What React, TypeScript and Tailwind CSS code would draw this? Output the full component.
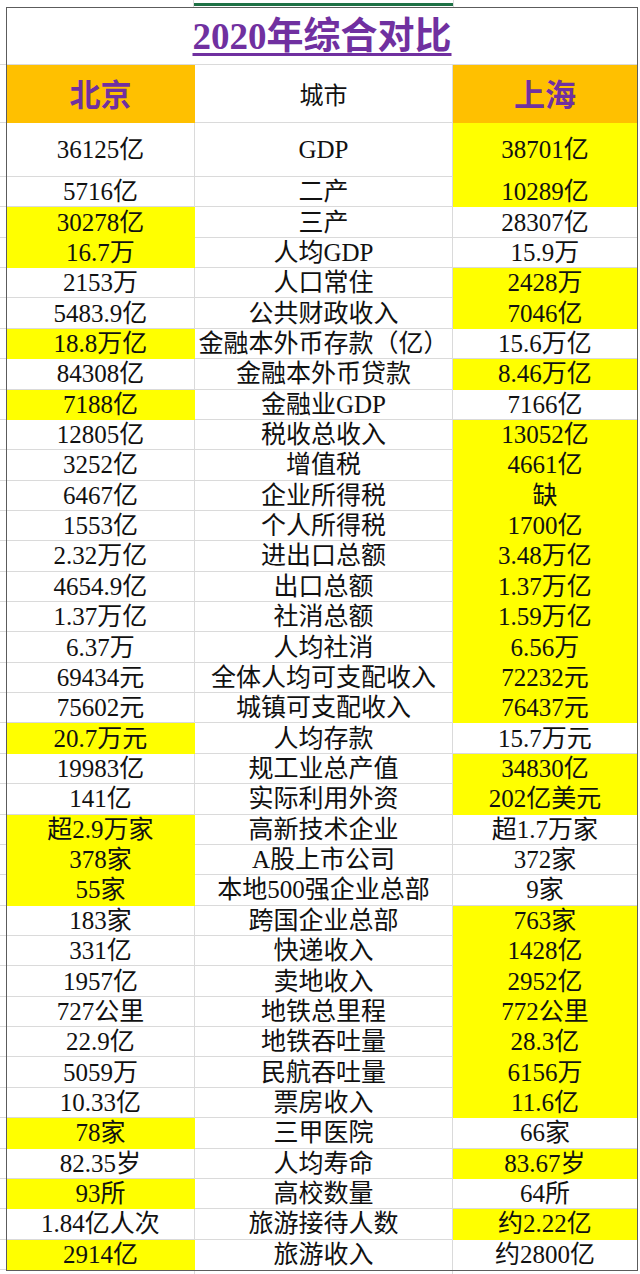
import clsx from 'clsx';

type Row = [string, string, string, 'L' | 'R'];

const ROWS: Row[] = [
  ['5716亿', '二产', '10289亿', 'R'],
  ['30278亿', '三产', '28307亿', 'L'],
  ['16.7万', '人均GDP', '15.9万', 'L'],
  ['2153万', '人口常住', '2428万', 'R'],
  ['5483.9亿', '公共财政收入', '7046亿', 'R'],
  ['18.8万亿', '金融本外币存款（亿）', '15.6万亿', 'L'],
  ['84308亿', '金融本外币贷款', '8.46万亿', 'R'],
  ['7188亿', '金融业GDP', '7166亿', 'L'],
  ['12805亿', '税收总收入', '13052亿', 'R'],
  ['3252亿', '增值税', '4661亿', 'R'],
  ['6467亿', '企业所得税', '缺', 'R'],
  ['1553亿', '个人所得税', '1700亿', 'R'],
  ['2.32万亿', '进出口总额', '3.48万亿', 'R'],
  ['4654.9亿', '出口总额', '1.37万亿', 'R'],
  ['1.37万亿', '社消总额', '1.59万亿', 'R'],
  ['6.37万', '人均社消', '6.56万', 'R'],
  ['69434元', '全体人均可支配收入', '72232元', 'R'],
  ['75602元', '城镇可支配收入', '76437元', 'R'],
  ['20.7万元', '人均存款', '15.7万元', 'L'],
  ['19983亿', '规工业总产值', '34830亿', 'R'],
  ['141亿', '实际利用外资', '202亿美元', 'R'],
  ['超2.9万家', '高新技术企业', '超1.7万家', 'L'],
  ['378家', 'A股上市公司', '372家', 'L'],
  ['55家', '本地500强企业总部', '9家', 'L'],
  ['183家', '跨国企业总部', '763家', 'R'],
  ['331亿', '快递收入', '1428亿', 'R'],
  ['1957亿', '卖地收入', '2952亿', 'R'],
  ['727公里', '地铁总里程', '772公里', 'R'],
  ['22.9亿', '地铁吞吐量', '28.3亿', 'R'],
  ['5059万', '民航吞吐量', '6156万', 'R'],
  ['10.33亿', '票房收入', '11.6亿', 'R'],
  ['78家', '三甲医院', '66家', 'L'],
  ['82.35岁', '人均寿命', '83.67岁', 'R'],
  ['93所', '高校数量', '64所', 'L'],
  ['1.84亿人次', '旅游接待人数', '约2.22亿', 'R'],
  ['2914亿', '旅游收入', '约2800亿', 'L'],
];

const GRID = 'border-[#dadada]';
const SERIF = "[font-family:'Liberation_Serif','Noto_Sans_CJK_SC',serif]";
const SANS = "[font-family:'Noto_Sans_CJK_SC',sans-serif]";

// one spreadsheet cell; filled cells hide their gridlines like Excel does
function Cell({ width, fill, last, noBottom, children }: any) {
  return (
    <div
      className={clsx(
        'flex items-center justify-center overflow-hidden whitespace-nowrap',
        width,
        !noBottom && 'border-b',
        !last && 'border-r',
        fill === 'yellow' && 'bg-[#ffff00] border-[#ffff00]',
        fill === 'orange' && 'bg-[#ffc000] border-[#ffc000]',
        !fill && `bg-white ${GRID}`
      )}
    >
      {children}
    </div>
  );
}

export default function App() {
  return (
    <div className={clsx('w-[640px] h-[1274px] bg-white overflow-hidden text-[#111]', SERIF)}>
      {/* sheet strip above the table, with the selected cell's green edge */}
      <div className="h-[7px] flex">
        <div className={`w-[194px] border-r ${GRID}`} />
        <div className="w-[259px] flex flex-col justify-end pb-[1px]">
          <div className="h-[3px] bg-[#1e7145]" />
        </div>
        <div className="w-[1px] bg-[#dadada]" />
      </div>

      <div className="flex">
        {/* left gutter ticks */}
        <div className="w-[6px] flex flex-col pt-[1px]">
          <div className={`h-[57px] border-b ${GRID}`} />
          <div className={`h-[58px] border-b ${GRID}`} />
          <div className={`h-[54px] border-b ${GRID}`} />
          {ROWS.map((_, i) => (
            <div key={i} className={`h-[30.36px] border-b ${GRID}`} />
          ))}
        </div>

        <div className="w-[632px] border border-[#5c5c5c] flex flex-col">
          {/* title */}
          <div className={`h-[57px] border-b ${GRID} flex items-center justify-center`}>
            <span className="text-[37px] font-bold text-[#7030a0] underline decoration-[3px] underline-offset-[4px] leading-none">
              2020年综合对比
            </span>
          </div>

          {/* header */}
          <div className="h-[58px] flex">
            <Cell width="w-[188px]" fill="orange">
              <span className={clsx('text-[31px] font-bold text-[#7030a0]', SANS)}>北京</span>
            </Cell>
            <Cell width="w-[258px]">
              <span className={clsx('text-[24px]', SANS)}>城市</span>
            </Cell>
            <Cell width="w-[184px]" fill="orange" last>
              <span className={clsx('text-[31px] font-bold text-[#7030a0]', SANS)}>上海</span>
            </Cell>
          </div>

          {/* GDP row is taller */}
          <div className="h-[54px] flex text-[25px]">
            <Cell width="w-[188px]">36125亿</Cell>
            <Cell width="w-[258px]">GDP</Cell>
            <Cell width="w-[184px]" fill="yellow" last>38701亿</Cell>
          </div>

          {ROWS.map(([l, m, r, hl], i) => {
            const end = i === ROWS.length - 1;
            return (
              <div key={m} className="h-[30.36px] flex text-[25px] leading-none">
                <Cell width="w-[188px]" fill={hl === 'L' ? 'yellow' : undefined} noBottom={end}>
                  {l}
                </Cell>
                <Cell width="w-[258px]" noBottom={end}>
                  {m}
                </Cell>
                <Cell width="w-[184px]" fill={hl === 'R' ? 'yellow' : undefined} last noBottom={end}>
                  {r}
                </Cell>
              </div>
            );
          })}
        </div>
      </div>

      {/* strip below */}
      <div className="h-[3px] flex">
        <div className={`w-[195px] border-r ${GRID}`} />
        <div className={`w-[258px] border-r ${GRID}`} />
      </div>
    </div>
  );
}
